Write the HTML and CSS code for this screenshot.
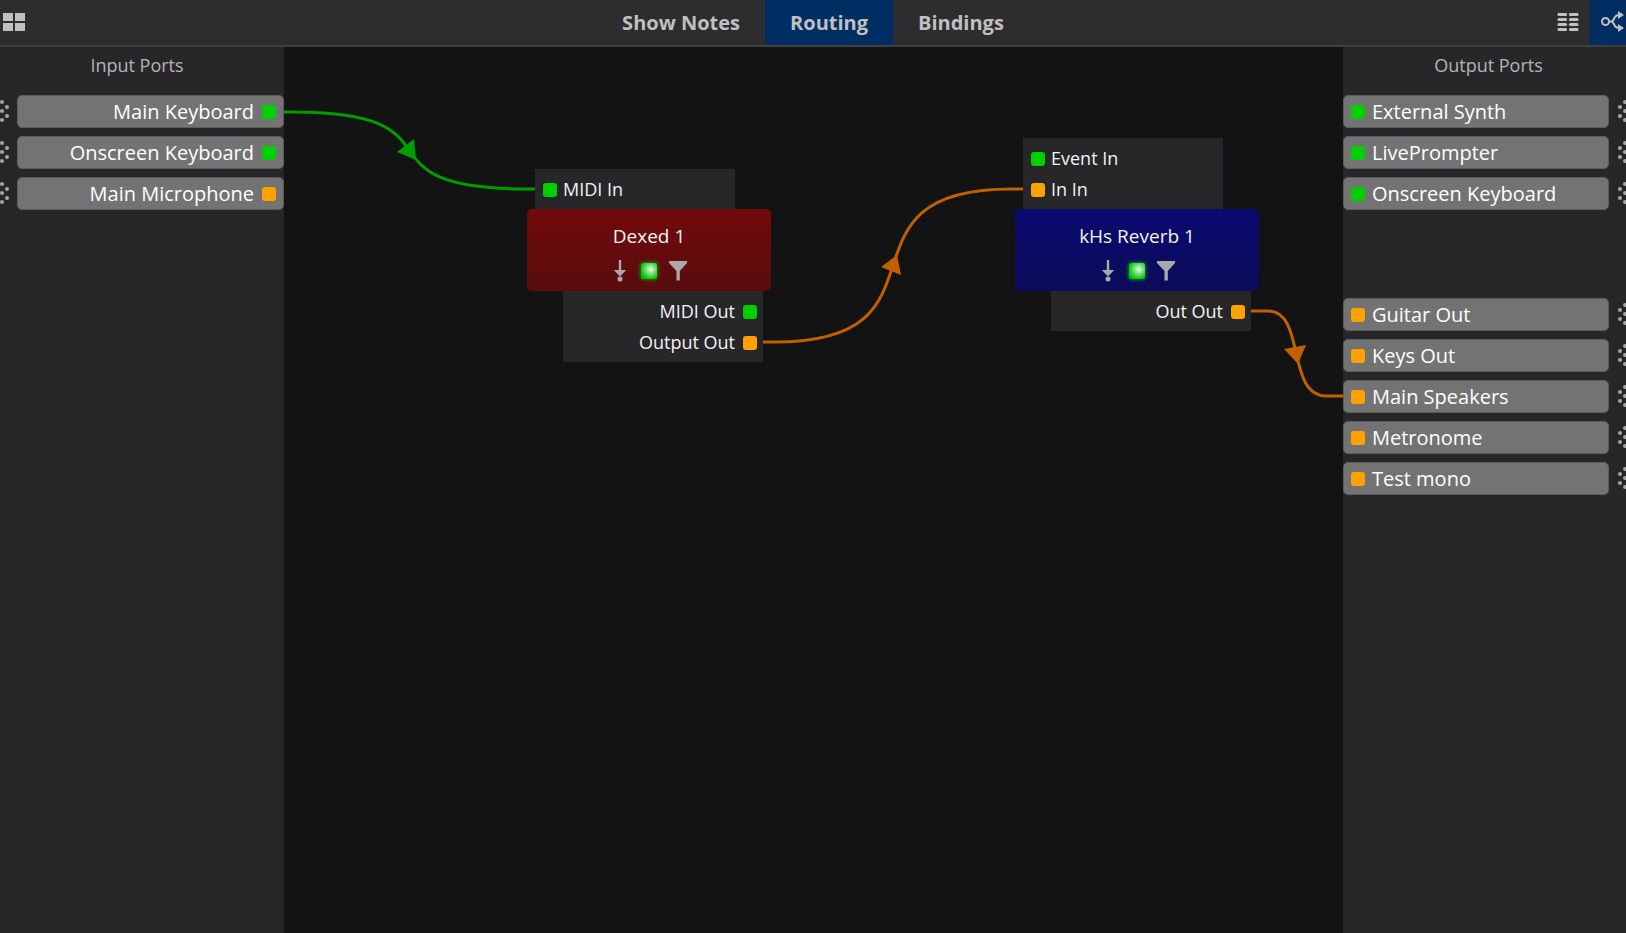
FILE: index.html
```html
<!DOCTYPE html>
<html lang="en">
<head>
<meta charset="utf-8">
<title>Routing</title>
<link rel="stylesheet" href="styles.css">
</head>
<body>
<svg class="defs" aria-hidden="true">
  <symbol id="grip" viewBox="0 0 16 24">
    <g fill="currentColor"><circle cx="2" cy="7" r="2"/><circle cx="2" cy="16" r="2"/><circle cx="7" cy="2" r="2"/><circle cx="7" cy="11" r="2"/><circle cx="7" cy="20" r="2"/><circle cx="13" cy="7" r="2"/><circle cx="13" cy="16" r="2"/></g>
  </symbol>
  <symbol id="inject" viewBox="0 0 14 22">
    <path d="M5.800 0h2.400v10h5L7 16.500 .8 10h5z" fill="currentColor"/><circle cx="7" cy="19" r="2.500" fill="currentColor"/>
  </symbol>
  <symbol id="filter" viewBox="0 0 18 20">
    <path d="M0 0h18v2l-7.200 8v9.500H7.500V10L0 2z" fill="currentColor"/>
  </symbol>
</svg>

<header class="topbar">
  <div class="tools">
    <button class="tool tool-left" type="button" aria-label="Panels">
      <svg width="22" height="18" viewBox="0 0 22 18"><path d="M0 0h10v8H0zM12 0h10v8H12zM0 10h10v8H0zM12 10h10v8H12z" fill="currentColor"/></svg>
    </button>
  </div>
  <nav class="tabs">
    <button class="tab" type="button">Show Notes</button>
    <button class="tab active" type="button">Routing</button>
    <button class="tab" type="button">Bindings</button>
  </nav>
  <div class="tools tools-right">
    <button class="tool tool-list" type="button" aria-label="List view">
      <svg width="22" height="18" viewBox="0 0 22 18"><path d="M2 1.500h6.500M13.500 1.500H20M2 6.500h6.500M13.500 6.500H20M2 11.500h6.500M13.500 11.500H20M2 16.500h6.500M13.500 16.500H20" stroke="currentColor" stroke-width="3.200" stroke-linecap="round"/></svg>
    </button>
    <button class="tool tool-graph active" type="button" aria-label="Graph view">
      <svg width="24" height="22" viewBox="0 0 24 22"><g fill="none" stroke="currentColor" stroke-width="2"><circle cx="4.500" cy="10.500" r="3.500"/><path d="M8 10.500h2c4 0 2-6.500 8-6.500M10 10.500c4 0 2 6.500 8 6.500"/></g><path d="M17 0l6 4-6 4zM17 13l6 4-6 4z" fill="currentColor"/></svg>
    </button>
  </div>
</header>

<main class="workspace">
  <aside class="side side-in">
    <h2 class="side-title">Input Ports</h2>
    <ul class="ports">
      <li class="row"><svg class="grip"><use href="#grip"/></svg><button class="port" type="button">Main Keyboard<i class="jack midi"></i></button></li>
      <li class="row"><svg class="grip"><use href="#grip"/></svg><button class="port" type="button">Onscreen Keyboard<i class="jack midi"></i></button></li>
      <li class="row"><svg class="grip"><use href="#grip"/></svg><button class="port" type="button">Main Microphone<i class="jack audio"></i></button></li>
    </ul>
  </aside>

  <section class="canvas" aria-label="Routing graph">
    <svg class="wires" aria-hidden="true">
      <g class="wire-midi"><path class="wire" d="M0 65H8C188 65 63 142 243 142H251"/><path class="head" d="M113 105l17-13 2 21z"/></g>
      <g class="wire-audio"><path class="wire" d="M479 295H491C677 295 541 142 727 142H739"/><path class="head" d="M597 220l16-12 4 20z"/></g>
      <g class="wire-audio"><path class="wire" d="M966 264H984C1022 264 1002 349 1042 349H1059"/><path class="head" d="M1000 302l22-4-8 19z"/></g>
    </svg>

    <article class="node node-dexed">
      <ul class="pins pins-in"><li><i class="jack midi"></i>MIDI In</li></ul>
      <div class="body">
        <h3>Dexed 1</h3>
        <div class="actions">
          <button type="button" aria-label="Inject"><svg width="14" height="22"><use href="#inject"/></svg></button>
          <button class="led" type="button" aria-label="Active"></button>
          <button type="button" aria-label="Filter"><svg width="18" height="20"><use href="#filter"/></svg></button>
        </div>
      </div>
      <ul class="pins pins-out"><li>MIDI Out<i class="jack midi"></i></li><li>Output Out<i class="jack audio"></i></li></ul>
    </article>

    <article class="node node-reverb">
      <ul class="pins pins-in"><li><i class="jack midi"></i>Event In</li><li><i class="jack audio"></i>In In</li></ul>
      <div class="body">
        <h3>kHs Reverb 1</h3>
        <div class="actions">
          <button type="button" aria-label="Inject"><svg width="14" height="22"><use href="#inject"/></svg></button>
          <button class="led" type="button" aria-label="Active"></button>
          <button type="button" aria-label="Filter"><svg width="18" height="20"><use href="#filter"/></svg></button>
        </div>
      </div>
      <ul class="pins pins-out"><li>Out Out<i class="jack audio"></i></li></ul>
    </article>
  </section>

  <aside class="side side-out">
    <h2 class="side-title">Output Ports</h2>
    <ul class="ports">
      <li class="row"><button class="port" type="button"><i class="jack midi"></i>External Synth</button><svg class="grip"><use href="#grip"/></svg></li>
      <li class="row"><button class="port" type="button"><i class="jack midi"></i>LivePrompter</button><svg class="grip"><use href="#grip"/></svg></li>
      <li class="row"><button class="port" type="button"><i class="jack midi"></i>Onscreen Keyboard</button><svg class="grip"><use href="#grip"/></svg></li>
    </ul>
    <ul class="ports ports-audio">
      <li class="row"><button class="port" type="button"><i class="jack audio"></i>Guitar Out</button><svg class="grip"><use href="#grip"/></svg></li>
      <li class="row"><button class="port" type="button"><i class="jack audio"></i>Keys Out</button><svg class="grip"><use href="#grip"/></svg></li>
      <li class="row"><button class="port" type="button"><i class="jack audio"></i>Main Speakers</button><svg class="grip"><use href="#grip"/></svg></li>
      <li class="row"><button class="port" type="button"><i class="jack audio"></i>Metronome</button><svg class="grip"><use href="#grip"/></svg></li>
      <li class="row"><button class="port" type="button"><i class="jack audio"></i>Test mono</button><svg class="grip"><use href="#grip"/></svg></li>
    </ul>
  </aside>
</main>
</body>
</html>
```
FILE: styles.css
```css
* { box-sizing: border-box; }

body {
  margin: 0;
  min-height: 100vh;
  display: flex;
  flex-direction: column;
  overflow-x: hidden;
  background: #131313;
  color: #f2f2f2;
  font-family: "Open Sans", "Noto Sans", sans-serif;
}

ul { list-style: none; margin: 0; padding: 0; }
h2, h3 { margin: 0; font-weight: 400; }
button { margin: 0; padding: 0; border: 0; background: none; color: inherit; font: inherit; }
svg { display: block; }
.defs { position: absolute; width: 0; height: 0; }

/* Top bar */
.topbar {
  display: grid;
  grid-template-columns: 1fr auto 1fr;
  background: #2d2d2f;
  border-bottom: 2px solid #3f3f40;
  color: #c0c0c0;
}
.tools { display: flex; }
.tools-right { justify-content: flex-end; }
.tool { display: flex; align-items: center; padding-bottom: 1px; }
.tool-left { padding-left: 3px; }
.tool-list { padding-right: 11px; }
.tool-graph { width: 36px; padding-left: 11px; }
.tabs { display: flex; }
.tab { height: 45px; padding: 0 25px; font-size: 20px; font-weight: 700; }
.active { background: #002d62; }

/* Side columns */
.workspace { flex: 1; display: flex; }
.side { width: 284px; flex: none; background: #272729; }
.side-title {
  padding: 5px 10px 0 0;
  font-size: 18px;
  line-height: 26px;
  text-align: center;
  color: #b4b4b4;
}
.ports { display: grid; gap: 8px; padding-top: 17px; }
.ports-audio { padding-top: 88px; }
.row { display: flex; align-items: center; }
.side-in .port { flex: 1; justify-content: flex-end; padding-right: 7px; }
.side-out { width: 283px; overflow: hidden; }
.side-out .side-title { padding-right: 0; padding-left: 8px; }
.side-out .port { width: 266px; padding-left: 7px; gap: 7px; }
.port {
  display: flex;
  align-items: center;
  gap: 8px;
  height: 33px;
  border: 1px solid #5c5c5d;
  border-radius: 5px;
  background: #737373;
  color: #fff;
  font-size: 20px;
  line-height: 30px;
}
.grip { flex: none; width: 16px; height: 24px; margin-left: 9px; color: #a6a6a6; }
.side-in .grip { margin: 0 8px 0 -7px; transform: scaleX(-1); }

.jack { flex: none; width: 14px; height: 14px; border-radius: 3px; }
.midi { background: #00d000; }
.audio { background: #ffa200; }

/* Graph canvas */
.canvas { position: relative; flex: 1; }
.wires { position: absolute; inset: 0; width: 100%; height: 100%; }
.wire { fill: none; stroke-width: 3; }
.wire-midi { stroke: #009c00; fill: #009c00; }
.wire-audio { stroke: #c06000; fill: #c06000; }
.wires .head { stroke: none; }

.node { position: absolute; width: 244px; }
.node-dexed { left: 243px; top: 122px; }
.node-reverb { left: 731px; top: 91px; }
.pins {
  width: 200px;
  padding: 5px 6px 4px 8px;
  background: #272729;
  font-size: 18px;
  line-height: 31px;
}
.pins li { display: flex; align-items: center; gap: 6px; }
.pins-in { margin-left: 8px; }
.pins-out { margin-left: 36px; }
.pins-out li { justify-content: flex-end; gap: 8px; }
.body {
  height: 82px;
  padding-top: 12px;
  border-radius: 5px;
  text-align: center;
}
.node-dexed .body { background: linear-gradient(#720a0a, #580c0e); }
.node-reverb .body { background: linear-gradient(#0a0a70, #0c0c5a); }
.body h3 { font-size: 19px; line-height: 30px; }
.actions {
  display: grid;
  grid-template-columns: repeat(3, 18px);
  justify-content: center;
  justify-items: center;
  align-items: center;
  gap: 11px;
  height: 40px;
  color: #a9a9ad;
}
.led {
  width: 16px;
  height: 16px;
  border-radius: 2px;
  background: radial-gradient(circle at 60% 40%, #e8ffe8, #70e070 35%, #00c000 75%);
  box-shadow: 0 0 4px #00c000;
}
```
